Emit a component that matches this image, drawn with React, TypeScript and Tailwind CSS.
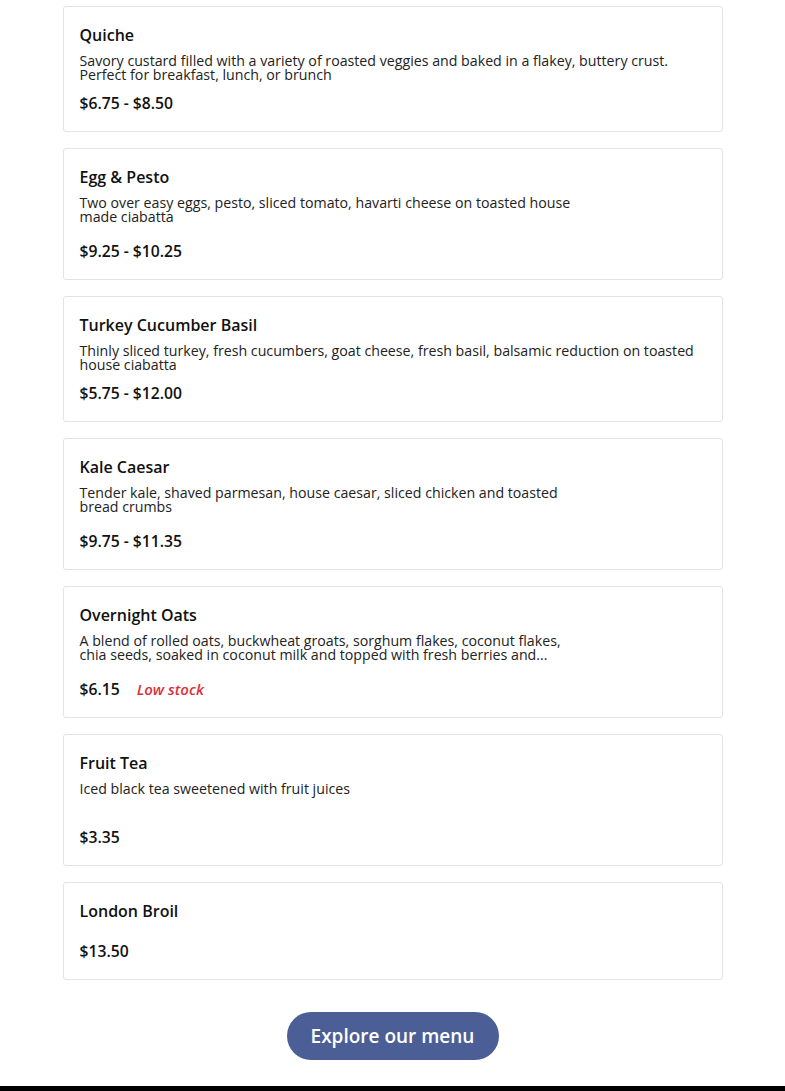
import React from "react";

type Item = { title: string; desc?: string; price: string; image?: boolean; low?: boolean };

const items: Item[] = [
  { title: "Quiche", desc: "Savory custard filled with a variety of roasted veggies and baked in a flakey, buttery crust. Perfect for breakfast, lunch, or brunch", price: "$6.75 - $8.50" },
  { title: "Egg & Pesto", desc: "Two over easy eggs, pesto, sliced tomato, havarti cheese on toasted house made ciabatta", price: "$9.25 - $10.25", image: true },
  { title: "Turkey Cucumber Basil", desc: "Thinly sliced turkey, fresh cucumbers, goat cheese, fresh basil, balsamic reduction on toasted house ciabatta", price: "$5.75 - $12.00" },
  { title: "Kale Caesar", desc: "Tender kale, shaved parmesan, house caesar, sliced chicken and toasted bread crumbs", price: "$9.75 - $11.35", image: true },
  { title: "Overnight Oats", desc: "A blend of rolled oats, buckwheat groats, sorghum flakes, coconut flakes, chia seeds, soaked in coconut milk and topped with fresh berries and...", price: "$6.15", image: true, low: true },
  { title: "Fruit Tea", desc: "Iced black tea sweetened with fruit juices", price: "$3.35", image: true },
  { title: "London Broil", price: "$13.50" },
];

function Card({ item }: { item: Item }) {
  return (
    <div className="border border-[#e3e3e3] rounded-[3px] bg-white p-4 flex">
      <div className={item.image ? "w-[505px] min-h-[98px] flex flex-col justify-between" : "flex-1 flex flex-col"}>
        <div>
          <div className="text-[16px] leading-[24px] font-semibold text-[#111]">{item.title}</div>
          {item.desc && (
            <div className="mt-[7px] text-[14.2px] leading-[14px] text-[#222]">{item.desc}</div>
          )}
        </div>
        <div className={item.desc ? "mt-[9px] flex items-center" : "mt-[16px] flex items-center"}>
          <span className="text-[15.7px] leading-[24px] font-semibold text-[#111]">{item.price}</span>
          {item.low && (
            <span className="ml-[17px] text-[15px] leading-[22px] font-semibold italic text-[#d8313c]">Low stock</span>
          )}
        </div>
      </div>
    </div>
  );
}

export default function App() {
  return (
    <div className="bg-white min-h-[1091px] flex flex-col" style={{ fontFamily: '"Open Sans", sans-serif' }}>
      <div className="w-[660px] mx-auto pt-[6px] flex flex-col gap-4">
        {items.map((it) => (
          <Card key={it.title} item={it} />
        ))}
      </div>
      <div className="flex justify-center mt-8">
        <button className="w-[212px] h-[48px] rounded-full bg-[#4b5f96] text-white text-[19px] font-semibold">
          Explore our menu
        </button>
      </div>
      <div className="flex-1" />
      <div className="h-[5px] bg-black" />
    </div>
  );
}
